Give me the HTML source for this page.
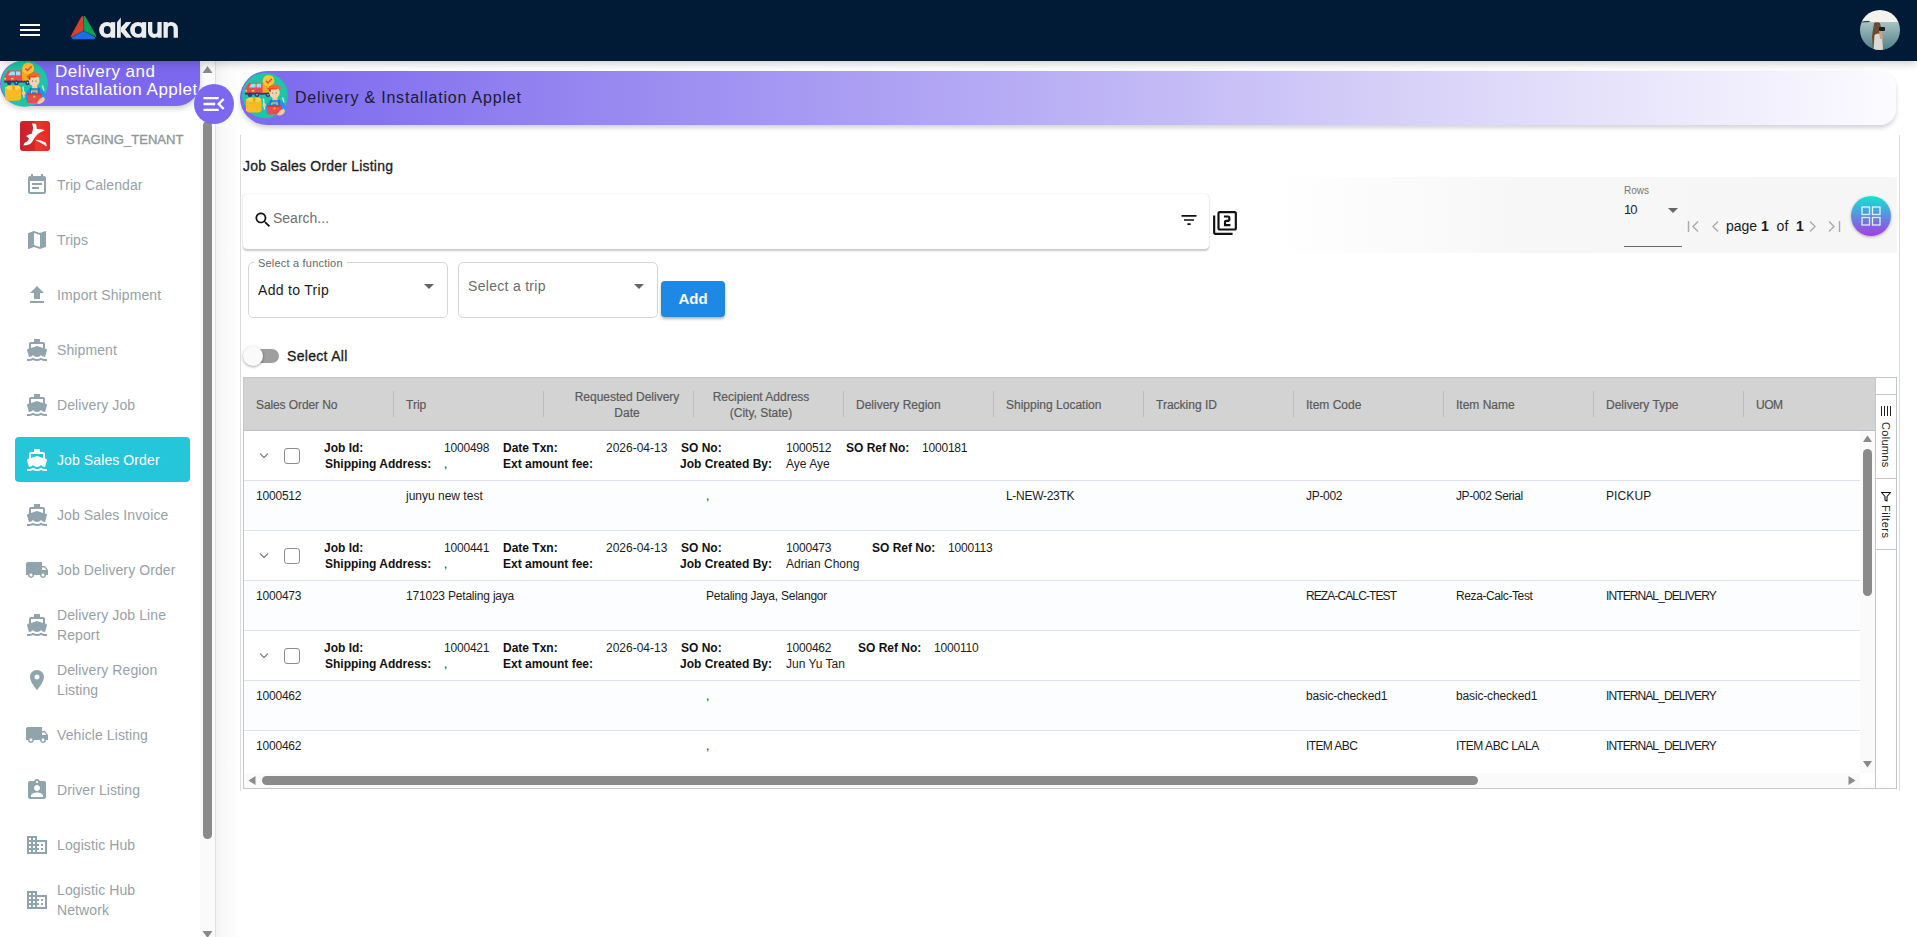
<!DOCTYPE html>
<html><head><meta charset="utf-8">
<style>
*{box-sizing:border-box;margin:0;padding:0}
html,body{width:1917px;height:937px;overflow:hidden;background:#fff;font-family:"Liberation Sans",sans-serif;color:#222}
.a{position:absolute}
.nw{white-space:nowrap}
svg{display:block}
/* header */
#hdr{left:0;top:0;width:1917px;height:61px;background:#011a35;z-index:5;box-shadow:0 2px 9px rgba(0,0,0,.22)}
/* sidebar */
#side{left:0;top:61px;width:216px;height:876px;background:#fff;border-right:1px solid #e0e0e0;z-index:3}
.mi{position:absolute;left:0;width:200px;height:45px}
.mi svg{position:absolute;left:26px;top:12px;width:22px;height:22px;fill:#90a4ae}
.mi span{position:absolute;left:57px;font-size:14px;color:#8f9ba1;white-space:nowrap;line-height:20px}
</style></head>
<body>
<svg width="0" height="0" style="position:absolute"><defs>
<symbol id="applet" viewBox="0 0 46 46">
<circle cx="23" cy="23" r="22.8" fill="#1fc6a6"/>
<path d="M20 10 H27.5 V21.5 H20Z" fill="#f6a81c"/>
<path d="M3.5 15.5 L7 10.2 H20.5 V21.5 H3.5Z" fill="#ee4850"/>
<path d="M7 15 L9.3 11.2 H13.6 V15Z" fill="#8fe6fb"/>
<path d="M14.6 11.2 H19 V15 H14.6Z" fill="#8fe6fb"/>
<rect x="3.3" y="17.5" width="1.6" height="1.6" fill="#ffd54f"/><rect x="9.8" y="17.5" width="2.4" height="1.6" fill="#ffd54f"/>
<rect x="3" y="20.3" width="25" height="1.8" fill="#2f3d6b"/>
<circle cx="8" cy="22.3" r="2.3" fill="#2f3d6b"/><circle cx="15" cy="22.3" r="2.3" fill="#2f3d6b"/><circle cx="26" cy="22.3" r="2.3" fill="#2f3d6b"/>
<circle cx="15" cy="22.3" r=".8" fill="#8fe6fb"/><circle cx="26" cy="22.3" r=".8" fill="#8fe6fb"/>
<circle cx="26.6" cy="8.2" r="5.8" fill="#fdc82f"/>
<path d="M23.8 8.2 L26 10.4 L29.8 6.2" stroke="#ee4850" stroke-width="1.5" fill="none"/>
<path d="M4 27 L7.5 25.3 H17.5 L19.5 27.5 V38.5 L16.5 40 H6.5 L4 38.3Z" fill="#fdbb22"/>
<path d="M4 27 L7.5 25.3 H17.5 L19.5 27.5 L15.5 29 H7Z" fill="#ffd54f"/>
<rect x="11" y="25.3" width="2.4" height="4" fill="#f59c1a"/>
<path d="M24 37 C24 30 27 27 33 27 C40 27 43 30 43.5 36 L42 41 H25Z" fill="#2c90e8"/>
<rect x="28.5" y="27" width="1.2" height="6" fill="#1d6ac2"/><rect x="36.5" y="27" width="1.2" height="6" fill="#1d6ac2"/>
<rect x="30.5" y="23.5" width="5" height="4" fill="#f7c7a0"/>
<ellipse cx="32.5" cy="20" rx="5.2" ry="5.6" fill="#f8d2b0"/>
<path d="M27 18 C27 15 28 14 29 14.5 L28.5 20Z" fill="#7a3b2a"/>
<path d="M26.5 16.5 C26.5 10.5 38.8 10.5 38.8 16.5Z" fill="#f2662b"/>
<rect x="25" y="15.5" width="10" height="1.6" rx=".8" fill="#e8531a"/>
<circle cx="30.8" cy="20.5" r=".5" fill="#333"/><circle cx="34.2" cy="20.5" r=".5" fill="#333"/>
<path d="M21.5 26 L22.5 37 M40.5 25 L42 30" stroke="#cfe3e8" stroke-width="1.4"/>
<circle cx="22.2" cy="32.5" r="1.8" fill="#f7c7a0"/>
<rect x="25.5" y="32.5" width="14" height="9.5" rx="1" fill="#ee4850"/>
<rect x="25.5" y="32.5" width="14" height="2" fill="#d63a42"/>
<path d="M29.8 32.5 V30.5 H35.2 V32.5" stroke="#fdc82f" stroke-width="1.1" fill="none"/>
<rect x="31.5" y="35" width="2" height="1.8" fill="#fdc82f"/>
<path d="M35 42 C37 44 41 43 43 39 L42 36 L38 38Z" fill="#f7c7a0"/>
</symbol>
</defs></svg>
<div id="hdr" class="a">
  <svg class="a" style="left:20px;top:23px" width="20" height="14" viewBox="0 0 20 14"><rect x="0" y="1" width="20" height="2" fill="#fff"/><rect x="0" y="6" width="20" height="2" fill="#fff"/><rect x="0" y="11" width="20" height="2" fill="#fff"/></svg>
  <svg class="a" style="left:66px;top:12px" width="36" height="32" viewBox="0 0 36 32">
    <polygon points="15.6,5 17,4.4 17,18.5 5.2,24.8 5.3,23.8" fill="#d9412b" stroke="#d9412b" stroke-width=".8" stroke-linejoin="round"/>
    <polygon points="18,4.4 19.2,5 29.8,23.8 29.8,24.6 18,18.5" fill="#07a35a" stroke="#07a35a" stroke-width=".8" stroke-linejoin="round"/>
    <polygon points="17.5,19.3 29,25.6 28.2,26.9 6.8,26.9 6,25.6" fill="#1a6fe8" stroke="#1a6fe8" stroke-width=".8" stroke-linejoin="round"/>
  </svg>
  <svg class="a" style="left:95px;top:12px" width="90" height="33" viewBox="0 0 90 33">
  <g fill="#ececec">
    <circle cx="12" cy="17.95" r="7.9"/><rect x="16" y="10.1" width="4.2" height="15.7"/>
    <path d="M22 10.2 L25.8 5.6 V25.8 H22Z"/>
    <path d="M25.8 15.6 L31 10.1 H36.3 L30.2 17.6 L36.8 25.8 H31.2 L25.8 19.4Z"/>
    <circle cx="43" cy="17.95" r="7.9"/><rect x="47" y="10.1" width="4.2" height="15.7"/>
    <path d="M53 10.1 H57.3 V19.2 A2.55 2.55 0 0 0 62.4 19.2 V10.1 H66.7 V25.8 H62.6 L62.4 24.6 C61.3 25.6 60.2 26 59.1 26 A6.1 6.6 0 0 1 53 19.4Z"/>
    <path d="M68.5 25.8 V10.1 H72.6 L72.8 11.3 C73.9 10.3 75 9.9 76.3 9.9 A6.6 6.6 0 0 1 82.9 16.5 V25.8 H78.6 V16.6 A2.9 2.9 0 0 0 72.8 16.6 V25.8Z"/>
  </g>
  <ellipse cx="12.2" cy="18" rx="3.4" ry="4.1" fill="#011a35"/>
  <ellipse cx="43.2" cy="18" rx="3.4" ry="4.1" fill="#011a35"/>
</svg>
  <svg class="a" style="left:1860px;top:10px" width="40" height="40" viewBox="0 0 40 40">
<defs><clipPath id="avc"><circle cx="20" cy="20" r="20"/></clipPath>
<linearGradient id="sea" x1="0" y1="0" x2="0" y2="1"><stop offset="0" stop-color="#a9c3c6"/><stop offset="1" stop-color="#4f8088"/></linearGradient></defs>
<g clip-path="url(#avc)">
<rect width="40" height="12" fill="#f4f2ec"/>
<rect y="12" width="40" height="28" fill="url(#sea)"/>
<path d="M0 12.5 Q3 10.5 6 11 Q8 10 10.5 12 Z" fill="#2c4a3a"/>
<path d="M14 13 Q17 11.5 20 13 L21.5 20 L20 35 L13 40 L12 26 Z" fill="#6e4a30"/>
<path d="M13.5 40 L14.5 25 Q18 22 22 25 L23 40Z" fill="#dcd8d4"/>
<path d="M19 21 L22 20 L23 29 L20 29Z" fill="#caa184"/>
<rect x="19" y="17" width="6" height="4" rx="1" fill="#1b1e1f"/>
</g></svg>

</div>

<div id="side" class="a">
  <div class="a" style="left:200px;top:0;width:15px;height:876px;background:#fafafa"></div>
  <svg class="a" style="left:202px;top:4px" width="11" height="9" viewBox="0 0 11 9"><polygon points="5.5,1 10.5,8 0.5,8" fill="#8a8a8a"/></svg>
  <div class="a" style="left:203px;top:60px;width:9px;height:718px;background:#8a8a8a;border-radius:5px"></div>
  <svg class="a" style="left:202px;top:869px" width="11" height="9" viewBox="0 0 11 9"><polygon points="0.5,1 10.5,1 5.5,8" fill="#8a8a8a"/></svg>

  <div class="a" style="left:0;top:0;width:200px;height:45px;background:#7b68ee;border-radius:23px 0 24px 23px;box-shadow:0 3px 5px rgba(0,0,0,.18)"></div>
  <svg class="a" style="left:1px;top:-1px" width="47" height="47"><use href="#applet"/></svg>
  <div class="a nw" style="left:55px;top:2px;font-size:17px;line-height:18px;color:#fff;width:145px;overflow:hidden;letter-spacing:0.5px">Delivery and<br>Installation Applet</div>
  <div class="a" style="left:194px;top:23px;width:40px;height:40px;border-radius:50%;background:#7b68ee;z-index:4">
    <svg class="a" style="left:6px;top:6px" width="28" height="28" viewBox="0 0 24 24"><path fill="#fff" d="M3 18h13v-2H3v2zm0-5h10v-2H3v2zm0-7v2h13V6H3zm18 9.59L17.42 12 21 8.41 19.59 7l-5 5 5 5L21 15.59z"/></svg>
  </div>

  <div class="a" style="left:20px;top:60px;width:30px;height:30px;border-radius:3px;background:linear-gradient(90deg,#c8222a 0%,#d2262a 45%,#ea3a28 55%,#e8262a 100%)">
    <svg class="a" style="left:0;top:0" width="30" height="30" viewBox="0 0 30 30"><path fill="#fff" d="M12 2.6 C14 2.4 16 3 16.2 3.8 L16.7 8.1 C19 8 23 8.2 24.8 9.4 C22 10.5 19 11.8 17 13.7 C15.5 15.5 14 17.5 13.2 19.2 C12 21.5 10.5 23 9 23.5 C7 24 4.5 24.6 3.4 24.4 C3.8 23.5 4.2 22.6 4.7 21.8 C6.5 21.5 8 20 9 17.5 C8 16.5 7 15.6 6 14.9 C8 13.8 10 13 12 12.4 L13.2 6.4 C12.8 5 12.2 3.8 12 2.6Z M15 18.8 C18.5 19 23 20 25.6 21.4 C26.5 22.8 26.8 24.2 26.5 25.6 C24.5 24.2 22.5 22.8 20.5 21.8 C18.5 20.8 16.5 19.8 15 18.8Z"/></svg>
  </div>
  <div class="a nw" style="left:66px;top:71px;font-size:13px;color:#8e979b;letter-spacing:0.05px;-webkit-text-stroke:0.35px #8e979b">STAGING_TENANT</div>
  <svg class="a" style="left:25px;top:112px" width="24" height="24" viewBox="0 0 24 24"><path fill="#90a4ae" d="M17 10H7v2h10v-2zm2-7h-1V1h-2v2H8V1H6v2H5c-1.11 0-1.99.9-1.99 2L3 19c0 1.1.89 2 2 2h14c1.1 0 2-.9 2-2V5c0-1.1-.9-2-2-2zm0 16H5V8h14v11zm-5-5H7v2h7v-2z"/></svg>
  <div class="a nw" style="left:57px;top:114px;font-size:14px;line-height:20px;color:#96a1a7;letter-spacing:0.1px">Trip Calendar</div>
  <svg class="a" style="left:25px;top:167px" width="24" height="24" viewBox="0 0 24 24"><path fill="#90a4ae" d="M20.5 3l-.16.03L15 5.1 9 3 3.36 4.9c-.21.07-.36.25-.36.48V20.5c0 .28.22.5.5.5l.16-.03L9 18.9l6 2.1 5.640-1.9c.21-.07.36-.25.36-.48V3.5c0-.28-.22-.5-.5-.5zM15 19l-6-2.11V5l6 2.11V19z"/></svg>
  <div class="a nw" style="left:57px;top:169px;font-size:14px;line-height:20px;color:#96a1a7;letter-spacing:0.1px">Trips</div>
  <svg class="a" style="left:25px;top:222px" width="24" height="24" viewBox="0 0 24 24"><path fill="#90a4ae" d="M9 16h6v-6h4l-7-7-7 7h4zm-4 2h14v2H5z"/></svg>
  <div class="a nw" style="left:57px;top:224px;font-size:14px;line-height:20px;color:#96a1a7;letter-spacing:0.1px">Import Shipment</div>
  <svg class="a" style="left:25px;top:277px" width="24" height="24" viewBox="0 0 24 24"><path fill="#90a4ae" d="M20 21c-1.39 0-2.78-.47-4-1.320-2.44 1.71-5.56 1.71-8 0C6.78 20.53 5.39 21 4 21H2v2h2c1.38 0 2.74-.35 4-.99 2.52 1.29 5.48 1.29 8 0 1.26.65 2.62.99 4 .99h2v-2h-2zM3.95 19H4c1.6 0 3.02-.88 4-2 .98 1.12 2.4 2 4 2s3.02-.88 4-2c.98 1.12 2.4 2 4 2h.05l1.89-6.68c.08-.26.06-.54-.06-.78s-.34-.42-.6-.5L20 10.62V6c0-1.1-.9-2-2-2h-3V1H9v3H6c-1.1 0-2 .9-2 2v4.62l-1.29.42c-.26.08-.48.26-.6.5s-.15.52-.06.78L3.95 19zM6 6h12v3.97L12 8 6 9.970V6z"/></svg>
  <div class="a nw" style="left:57px;top:279px;font-size:14px;line-height:20px;color:#96a1a7;letter-spacing:0.1px">Shipment</div>
  <svg class="a" style="left:25px;top:332px" width="24" height="24" viewBox="0 0 24 24"><path fill="#90a4ae" d="M20 21c-1.39 0-2.78-.47-4-1.320-2.44 1.71-5.56 1.71-8 0C6.78 20.53 5.39 21 4 21H2v2h2c1.38 0 2.74-.35 4-.99 2.52 1.29 5.48 1.29 8 0 1.26.65 2.62.99 4 .99h2v-2h-2zM3.95 19H4c1.6 0 3.02-.88 4-2 .98 1.12 2.4 2 4 2s3.02-.88 4-2c.98 1.12 2.4 2 4 2h.05l1.89-6.68c.08-.26.06-.54-.06-.78s-.34-.42-.6-.5L20 10.62V6c0-1.1-.9-2-2-2h-3V1H9v3H6c-1.1 0-2 .9-2 2v4.62l-1.29.42c-.26.08-.48.26-.6.5s-.15.52-.06.78L3.95 19zM6 6h12v3.97L12 8 6 9.970V6z"/></svg>
  <div class="a nw" style="left:57px;top:334px;font-size:14px;line-height:20px;color:#96a1a7;letter-spacing:0.1px">Delivery Job</div>
  <div class="a" style="left:15px;top:376px;width:175px;height:45px;background:#26c6da;border-radius:4px"></div>
  <svg class="a" style="left:25px;top:387px" width="24" height="24" viewBox="0 0 24 24"><path fill="#fff" d="M20 21c-1.39 0-2.78-.47-4-1.320-2.44 1.71-5.56 1.71-8 0C6.78 20.53 5.39 21 4 21H2v2h2c1.38 0 2.74-.35 4-.99 2.52 1.29 5.48 1.29 8 0 1.26.65 2.62.99 4 .99h2v-2h-2zM3.95 19H4c1.6 0 3.02-.88 4-2 .98 1.12 2.4 2 4 2s3.02-.88 4-2c.98 1.12 2.4 2 4 2h.05l1.89-6.68c.08-.26.06-.54-.06-.78s-.34-.42-.6-.5L20 10.62V6c0-1.1-.9-2-2-2h-3V1H9v3H6c-1.1 0-2 .9-2 2v4.62l-1.29.42c-.26.08-.48.26-.6.5s-.15.52-.06.78L3.95 19zM6 6h12v3.97L12 8 6 9.970V6z"/></svg>
  <div class="a nw" style="left:57px;top:389px;font-size:14px;line-height:20px;color:#fff;letter-spacing:0.1px">Job Sales Order</div>
  <svg class="a" style="left:25px;top:442px" width="24" height="24" viewBox="0 0 24 24"><path fill="#90a4ae" d="M20 21c-1.39 0-2.78-.47-4-1.320-2.44 1.71-5.56 1.71-8 0C6.78 20.53 5.39 21 4 21H2v2h2c1.38 0 2.74-.35 4-.99 2.52 1.29 5.48 1.29 8 0 1.26.65 2.62.99 4 .99h2v-2h-2zM3.95 19H4c1.6 0 3.02-.88 4-2 .98 1.12 2.4 2 4 2s3.02-.88 4-2c.98 1.12 2.4 2 4 2h.05l1.89-6.68c.08-.26.06-.54-.06-.78s-.34-.42-.6-.5L20 10.62V6c0-1.1-.9-2-2-2h-3V1H9v3H6c-1.1 0-2 .9-2 2v4.62l-1.29.42c-.26.08-.48.26-.6.5s-.15.52-.06.78L3.95 19zM6 6h12v3.97L12 8 6 9.970V6z"/></svg>
  <div class="a nw" style="left:57px;top:444px;font-size:14px;line-height:20px;color:#96a1a7;letter-spacing:0.1px">Job Sales Invoice</div>
  <svg class="a" style="left:25px;top:497px" width="24" height="24" viewBox="0 0 24 24"><path fill="#90a4ae" d="M20 8h-3V4H3c-1.1 0-2 .9-2 2v11h2c0 1.66 1.34 3 3 3s3-1.34 3-3h6c0 1.66 1.34 3 3 3s3-1.34 3-3h2v-5l-3-4zM6 18.5c-.83 0-1.5-.67-1.5-1.5s.67-1.5 1.5-1.5 1.5.67 1.5 1.5-.67 1.5-1.5 1.5zm13.5-9l1.96 2.5H17V9.5h2.5zm-1.5 9c-.83 0-1.5-.67-1.5-1.5s.67-1.5 1.5-1.5 1.5.67 1.5 1.5-.67 1.5-1.5 1.5z"/></svg>
  <div class="a nw" style="left:57px;top:499px;font-size:14px;line-height:20px;color:#96a1a7;letter-spacing:0.1px">Job Delivery Order</div>
  <svg class="a" style="left:25px;top:552px" width="24" height="24" viewBox="0 0 24 24"><path fill="#90a4ae" d="M20 21c-1.39 0-2.78-.47-4-1.320-2.44 1.71-5.56 1.71-8 0C6.78 20.53 5.39 21 4 21H2v2h2c1.38 0 2.74-.35 4-.99 2.52 1.29 5.48 1.29 8 0 1.26.65 2.62.99 4 .99h2v-2h-2zM3.95 19H4c1.6 0 3.02-.88 4-2 .98 1.12 2.4 2 4 2s3.02-.88 4-2c.98 1.12 2.4 2 4 2h.05l1.89-6.68c.08-.26.06-.54-.06-.78s-.34-.42-.6-.5L20 10.62V6c0-1.1-.9-2-2-2h-3V1H9v3H6c-1.1 0-2 .9-2 2v4.62l-1.29.42c-.26.08-.48.26-.6.5s-.15.52-.06.78L3.95 19zM6 6h12v3.97L12 8 6 9.970V6z"/></svg>
  <div class="a nw" style="left:57px;top:544px;font-size:14px;line-height:20px;color:#96a1a7;letter-spacing:0.1px">Delivery Job Line<br>Report</div>
  <svg class="a" style="left:25px;top:607px" width="24" height="24" viewBox="0 0 24 24"><path fill="#90a4ae" d="M12 2C8.13 2 5 5.13 5 9c0 5.250 7 13 7 13s7-7.75 7-13c0-3.87-3.13-7-7-7zm0 9.5c-1.38 0-2.5-1.12-2.5-2.5s1.12-2.5 2.5-2.5 2.5 1.12 2.5 2.5-1.12 2.5-2.5 2.5z"/></svg>
  <div class="a nw" style="left:57px;top:599px;font-size:14px;line-height:20px;color:#96a1a7;letter-spacing:0.1px">Delivery Region<br>Listing</div>
  <svg class="a" style="left:25px;top:662px" width="24" height="24" viewBox="0 0 24 24"><path fill="#90a4ae" d="M20 8h-3V4H3c-1.1 0-2 .9-2 2v11h2c0 1.66 1.34 3 3 3s3-1.34 3-3h6c0 1.66 1.34 3 3 3s3-1.34 3-3h2v-5l-3-4zM6 18.5c-.83 0-1.5-.67-1.5-1.5s.67-1.5 1.5-1.5 1.5.67 1.5 1.5-.67 1.5-1.5 1.5zm13.5-9l1.96 2.5H17V9.5h2.5zm-1.5 9c-.83 0-1.5-.67-1.5-1.5s.67-1.5 1.5-1.5 1.5.67 1.5 1.5-.67 1.5-1.5 1.5z"/></svg>
  <div class="a nw" style="left:57px;top:664px;font-size:14px;line-height:20px;color:#96a1a7;letter-spacing:0.1px">Vehicle Listing</div>
  <svg class="a" style="left:25px;top:717px" width="24" height="24" viewBox="0 0 24 24"><path fill="#90a4ae" d="M19 3h-4.18C14.4 1.84 13.3 1 12 1c-1.3 0-2.4.84-2.82 2H5c-1.1 0-2 .9-2 2v14c0 1.1.9 2 2 2h14c1.1 0 2-.9 2-2V5c0-1.1-.9-2-2-2zm-7 0c.55 0 1 .45 1 1s-.45 1-1 1-1-.45-1-1 .45-1 1-1zm0 4c1.66 0 3 1.34 3 3s-1.34 3-3 3-3-1.34-3-3 1.34-3 3-3zm6 12H6v-1.4c0-2 4-3.1 6-3.1s6 1.1 6 3.1V19z"/></svg>
  <div class="a nw" style="left:57px;top:719px;font-size:14px;line-height:20px;color:#96a1a7;letter-spacing:0.1px">Driver Listing</div>
  <svg class="a" style="left:25px;top:772px" width="24" height="24" viewBox="0 0 24 24"><path fill="#90a4ae" d="M12 7V3H2v18h20V7H12zM6 19H4v-2h2v2zm0-4H4v-2h2v2zm0-4H4V9h2v2zm0-4H4V5h2v2zm4 12H8v-2h2v2zm0-4H8v-2h2v2zm0-4H8V9h2v2zm0-4H8V5h2v2zm10 12h-8v-2h2v-2h-2v-2h2v-2h-2V9h8v10zm-2-8h-2v2h2v-2zm0 4h-2v2h2v-2z"/></svg>
  <div class="a nw" style="left:57px;top:774px;font-size:14px;line-height:20px;color:#96a1a7;letter-spacing:0.1px">Logistic Hub</div>
  <svg class="a" style="left:25px;top:827px" width="24" height="24" viewBox="0 0 24 24"><path fill="#90a4ae" d="M12 7V3H2v18h20V7H12zM6 19H4v-2h2v2zm0-4H4v-2h2v2zm0-4H4V9h2v2zm0-4H4V5h2v2zm4 12H8v-2h2v2zm0-4H8v-2h2v2zm0-4H8V9h2v2zm0-4H8V5h2v2zm10 12h-8v-2h2v-2h-2v-2h2v-2h-2V9h8v10zm-2-8h-2v2h2v-2zm0 4h-2v2h2v-2z"/></svg>
  <div class="a nw" style="left:57px;top:819px;font-size:14px;line-height:20px;color:#96a1a7;letter-spacing:0.1px">Logistic Hub<br>Network</div>
</div>


<!-- sidebar shadow -->
<div class="a" style="left:216px;top:61px;width:28px;height:876px;background:linear-gradient(90deg,#f3f3f3,rgba(248,248,248,.6) 40%,rgba(255,255,255,0))"></div>
<!-- banner -->
<div class="a" style="left:240px;top:71px;width:1656px;height:54px;border-radius:27px 16px 16px 27px;background:linear-gradient(90deg,#7b68ee 0%,#9b8cf1 25%,#bbb1f5 50%,#ddd8f9 75%,#fcfbff 100%);box-shadow:0 3px 4px rgba(30,40,70,.2)"></div>
<svg class="a" style="left:242px;top:72px" width="46" height="47"><use href="#applet"/></svg>
<div class="a nw" style="left:295px;top:89px;font-size:16px;color:#1b1b33;letter-spacing:0.8px">Delivery &amp; Installation Applet</div>
<!-- card borders -->
<div class="a" style="left:240px;top:135px;width:1px;height:656px;background:#dcdcdc"></div>
<div class="a" style="left:1899px;top:135px;width:1px;height:656px;background:#dcdcdc"></div>
<div class="a nw" style="left:243px;top:158px;font-size:14px;color:#1d1d1d;letter-spacing:0.2px;-webkit-text-stroke:0.3px #1d1d1d">Job Sales Order Listing</div>
<!-- search -->
<div class="a" style="left:243px;top:194px;width:966px;height:55px;background:#fff;border-radius:4px;box-shadow:0 2px 2px rgba(0,0,0,.2),0 0 1px rgba(0,0,0,.25)"></div>
<svg class="a" style="left:253px;top:210px" width="20" height="20" viewBox="0 0 24 24"><path fill="#111" d="M15.5 14h-.79l-.28-.27C15.41 12.59 16 11.11 16 9.5 16 5.91 13.09 3 9.5 3S3 5.91 3 9.5 5.91 16 9.5 16c1.61 0 3.09-.59 4.23-1.57l.27.28v.79l5 4.99L20.49 19l-4.99-5zm-6 0C7.01 14 5 11.99 5 9.5S7.01 5 9.5 5 14 7.01 14 9.5 11.99 14 9.5 14z"/></svg>
<div class="a nw" style="left:273px;top:210px;font-size:14px;color:#707070;letter-spacing:0px">Search...</div>
<svg class="a" style="left:1179px;top:210px" width="20" height="20" viewBox="0 0 24 24"><path fill="#111" d="M10 18h4v-2h-4v2zM3 6v2h18V6H3zm3 7h12v-2H6v2z"/></svg>
<svg class="a" style="left:1212px;top:210px" width="26" height="26" viewBox="0 0 24 24"><path fill="#111" d="M3 5H1v16c0 1.1.9 2 2 2h16v-2H3V5zm18-4H7c-1.1 0-2 .9-2 2v14c0 1.1.9 2 2 2h14c1.1 0 2-.9 2-2V3c0-1.1-.9-2-2-2zm0 16H7V3h14v14zm-4-4h-4v-2h2c1.1 0 2-.89 2-2V7c0-1.11-.9-2-2-2h-4v2h4v2h-2c-1.1 0-2 .89-2 2v4h6v-2z"/></svg>
<!-- pagination band -->
<div class="a" style="left:1270px;top:177px;width:627px;height:76px;background:linear-gradient(90deg,rgba(247,247,247,0) 0%,#f7f7f7 40%,#f6f6f6 100%)"></div>
<div class="a nw" style="left:1624px;top:185px;font-size:10px;color:#777">Rows</div>
<div class="a nw" style="left:1624px;top:202px;font-size:13px;color:#222;letter-spacing:-0.9px">10</div>
<svg class="a" style="left:1666px;top:204px" width="14" height="14" viewBox="0 0 14 14"><polygon points="2,4 12,4 7,9" fill="#666"/></svg>
<div class="a" style="left:1624px;top:246px;width:58px;height:1px;background:#666"></div>
<svg class="a" style="left:1684px;top:214px" width="20" height="24" viewBox="0 0 20 24"><path d="M4.5 7 V18 M14 7.5 L9 12.5 L14 17.5" stroke="#aaa" stroke-width="1.4" fill="none"/></svg>
<svg class="a" style="left:1707px;top:214px" width="16" height="24" viewBox="0 0 16 24"><path d="M11 7.5 L6 12.5 L11 17.5" stroke="#aaa" stroke-width="1.4" fill="none"/></svg>
<div class="a nw" style="left:1726px;top:218px;font-size:14px;color:#1a1a1a">page <b style="font-weight:700">1</b>&nbsp; of &nbsp;<b>1</b></div>
<svg class="a" style="left:1805px;top:214px" width="16" height="24" viewBox="0 0 16 24"><path d="M5 7.5 L10 12.5 L5 17.5" stroke="#aaa" stroke-width="1.4" fill="none"/></svg>
<svg class="a" style="left:1824px;top:214px" width="20" height="24" viewBox="0 0 20 24"><path d="M5 7.5 L10 12.5 L5 17.5 M15.5 7 V18" stroke="#aaa" stroke-width="1.4" fill="none"/></svg>
<div class="a" style="left:1851px;top:196px;width:40px;height:40px;border-radius:50%;background:linear-gradient(180deg,#12e6cf 0%,#5a8fe0 50%,#a83be3 100%);box-shadow:0 1px 3px rgba(0,0,0,.3)">
  <svg class="a" style="left:9px;top:9px" width="22" height="22" viewBox="0 0 22 22"><g fill="none" stroke="#fff" stroke-width="1.3" opacity=".85"><rect x="2" y="2" width="7.5" height="7.5"/><rect x="12.5" y="2" width="7.5" height="7.5"/><rect x="2" y="12.5" width="7.5" height="7.5"/><rect x="12.5" y="12.5" width="7.5" height="7.5"/></g></svg>
</div>
<!-- function selects -->
<div class="a" style="left:248px;top:262px;width:200px;height:56px;border:1px solid #d6d6d6;border-radius:5px"></div>
<div class="a nw" style="left:254px;top:257px;font-size:11px;color:#666;background:#fff;padding:0 4px;letter-spacing:0.2px">Select a function</div>
<div class="a nw" style="left:258px;top:282px;font-size:14px;color:#1a1a1a;letter-spacing:0.3px">Add to Trip</div>
<svg class="a" style="left:422px;top:280px" width="14" height="14" viewBox="0 0 14 14"><polygon points="2,4 12,4 7,9" fill="#666"/></svg>
<div class="a" style="left:458px;top:262px;width:200px;height:56px;border:1px solid #d6d6d6;border-radius:5px"></div>
<div class="a nw" style="left:468px;top:278px;font-size:14px;color:#6c6c6c;letter-spacing:0.3px">Select a trip</div>
<svg class="a" style="left:632px;top:280px" width="14" height="14" viewBox="0 0 14 14"><polygon points="2,4 12,4 7,9" fill="#666"/></svg>
<div class="a" style="left:661px;top:281px;width:64px;height:36px;background:#1e88e5;border-radius:4px;box-shadow:0 2px 3px rgba(0,0,0,.3);color:#fff;font-weight:700;font-size:15px;text-align:center;line-height:36px">Add</div>
<!-- select all -->
<div class="a" style="left:245px;top:349px;width:34px;height:14px;border-radius:7px;background:#9e9e9e"></div>
<div class="a" style="left:243px;top:346px;width:20px;height:20px;border-radius:50%;background:#fafafa;box-shadow:0 1px 3px rgba(0,0,0,.35)"></div>
<div class="a nw" style="left:287px;top:348px;font-size:14px;color:#1a1a1a;letter-spacing:0.3px;-webkit-text-stroke:0.3px #1a1a1a">Select All</div>

<!-- table -->
<div class="a" style="left:243px;top:377px;width:1654px;height:412px;border:1px solid #c2c7ce;background:#fff"></div>
<div class="a" style="left:244px;top:378px;width:1632px;height:53px;background:#d3d3d3;border-bottom:1px solid #babfc7"></div>
<div class="a" style="left:393px;top:391px;width:1px;height:26px;background:#bdbdbd"></div>
<div class="a" style="left:543px;top:391px;width:1px;height:26px;background:#bdbdbd"></div>
<div class="a" style="left:693px;top:391px;width:1px;height:26px;background:#bdbdbd"></div>
<div class="a" style="left:843px;top:391px;width:1px;height:26px;background:#bdbdbd"></div>
<div class="a" style="left:993px;top:391px;width:1px;height:26px;background:#bdbdbd"></div>
<div class="a" style="left:1143px;top:391px;width:1px;height:26px;background:#bdbdbd"></div>
<div class="a" style="left:1293px;top:391px;width:1px;height:26px;background:#bdbdbd"></div>
<div class="a" style="left:1443px;top:391px;width:1px;height:26px;background:#bdbdbd"></div>
<div class="a" style="left:1593px;top:391px;width:1px;height:26px;background:#bdbdbd"></div>
<div class="a" style="left:1743px;top:391px;width:1px;height:26px;background:#bdbdbd"></div>
<div class="a nw" style="left:256px;top:397px;font-size:12px;line-height:16px;color:#5a5a5a;-webkit-text-stroke:0.2px #5a5a5a;letter-spacing:-0.1px">Sales Order No</div>
<div class="a nw" style="left:406px;top:397px;font-size:12px;line-height:16px;color:#5a5a5a;-webkit-text-stroke:0.2px #5a5a5a;letter-spacing:0px">Trip</div>
<div class="a nw" style="left:574px;top:389px;width:106px;font-size:12px;line-height:16px;color:#5a5a5a;-webkit-text-stroke:0.2px #5a5a5a;text-align:center">Requested Delivery<br>Date</div>
<div class="a nw" style="left:712px;top:389px;width:98px;font-size:12px;line-height:16px;color:#5a5a5a;-webkit-text-stroke:0.2px #5a5a5a;text-align:center">Recipient Address<br>(City, State)</div>
<div class="a nw" style="left:856px;top:397px;font-size:12px;line-height:16px;color:#5a5a5a;-webkit-text-stroke:0.2px #5a5a5a;letter-spacing:0px">Delivery Region</div>
<div class="a nw" style="left:1006px;top:397px;font-size:12px;line-height:16px;color:#5a5a5a;-webkit-text-stroke:0.2px #5a5a5a;letter-spacing:0px">Shipping Location</div>
<div class="a nw" style="left:1156px;top:397px;font-size:12px;line-height:16px;color:#5a5a5a;-webkit-text-stroke:0.2px #5a5a5a;letter-spacing:0px">Tracking ID</div>
<div class="a nw" style="left:1306px;top:397px;font-size:12px;line-height:16px;color:#5a5a5a;-webkit-text-stroke:0.2px #5a5a5a;letter-spacing:0px">Item Code</div>
<div class="a nw" style="left:1456px;top:397px;font-size:12px;line-height:16px;color:#5a5a5a;-webkit-text-stroke:0.2px #5a5a5a;letter-spacing:0px">Item Name</div>
<div class="a nw" style="left:1606px;top:397px;font-size:12px;line-height:16px;color:#5a5a5a;-webkit-text-stroke:0.2px #5a5a5a;letter-spacing:0px">Delivery Type</div>
<div class="a nw" style="left:1756px;top:397px;font-size:12px;line-height:16px;color:#5a5a5a;-webkit-text-stroke:0.2px #5a5a5a;letter-spacing:-0.5px">UOM</div>
<div class="a" style="left:1875px;top:378px;width:21px;height:410px;border-left:1px solid #c2c7ce;background:#fff"></div>
<div class="a" style="left:1875px;top:394px;width:21px;height:1px;background:#c2c7ce"></div>
<div class="a" style="left:1875px;top:478px;width:21px;height:1px;background:#c2c7ce"></div>
<div class="a" style="left:1875px;top:549px;width:21px;height:1px;background:#c2c7ce"></div>
<svg class="a" style="left:1880px;top:405px" width="12" height="12" viewBox="0 0 12 12"><path d="M1.5 1V11 M4.5 1V11 M7.5 1V11 M10.5 1V11" stroke="#222" stroke-width="1"/></svg>
<div class="a nw" style="left:1879px;top:422px;font-size:11px;line-height:14px;color:#222;writing-mode:vertical-rl;letter-spacing:0.3px">Columns</div>
<svg class="a" style="left:1880px;top:491px" width="12" height="12" viewBox="0 0 12 12"><path d="M1.5 1.5 H10.5 L7 5.5 V10 L5 9 V5.5 Z" stroke="#111" stroke-width="1.1" fill="none" stroke-linejoin="round"/></svg>
<div class="a nw" style="left:1879px;top:505px;font-size:11px;line-height:14px;color:#222;writing-mode:vertical-rl;letter-spacing:0.5px">Filters</div>
<div class="a" style="left:244px;top:431px;width:1616px;height:50px;background:#fff;border-bottom:1px solid #dde2eb"></div>
<div class="a" style="left:244px;top:481px;width:1616px;height:50px;background:#fcfdfe;border-bottom:1px solid #dde2eb"></div>
<div class="a" style="left:244px;top:531px;width:1616px;height:50px;background:#fff;border-bottom:1px solid #dde2eb"></div>
<div class="a" style="left:244px;top:581px;width:1616px;height:50px;background:#fcfdfe;border-bottom:1px solid #dde2eb"></div>
<div class="a" style="left:244px;top:631px;width:1616px;height:50px;background:#fff;border-bottom:1px solid #dde2eb"></div>
<div class="a" style="left:244px;top:681px;width:1616px;height:50px;background:#fcfdfe;border-bottom:1px solid #dde2eb"></div>
<div class="a" style="left:244px;top:731px;width:1616px;height:50px;background:#fff;border-bottom:1px solid #dde2eb"></div>
<svg class="a" style="left:257px;top:450px" width="14" height="10" viewBox="0 0 14 10"><path d="M3 3.5 L7 7.5 L11 3.5" stroke="#555" stroke-width="1.05" fill="none"/></svg>
<div class="a" style="left:284px;top:448px;width:16px;height:16px;border:1px solid #8c8c8c;border-radius:3px;background:#fff"></div>
<div class="a nw" style="left:324px;top:440px;font-size:12px;line-height:16px;color:#111;font-weight:700;letter-spacing:0px">Job Id:</div>
<div class="a nw" style="left:325px;top:456px;font-size:12px;line-height:16px;color:#111;font-weight:700;letter-spacing:0px">Shipping Address:</div>
<div class="a nw" style="left:444px;top:440px;font-size:12px;line-height:16px;color:#1c1c1c;letter-spacing:-0.2px">1000498</div>
<div class="a nw" style="left:444px;top:456px;font-size:12px;line-height:16px;color:#1c1c1c;letter-spacing:0px">,</div>
<div class="a nw" style="left:503px;top:440px;font-size:12px;line-height:16px;color:#111;font-weight:700;letter-spacing:0px">Date Txn:</div>
<div class="a nw" style="left:503px;top:456px;font-size:12px;line-height:16px;color:#111;font-weight:700;letter-spacing:0px">Ext amount fee:</div>
<div class="a nw" style="left:606px;top:440px;font-size:12px;line-height:16px;color:#1c1c1c;letter-spacing:0px">2026-04-13</div>
<div class="a nw" style="left:681px;top:440px;font-size:12px;line-height:16px;color:#111;font-weight:700;letter-spacing:0px">SO No:</div>
<div class="a nw" style="left:680px;top:456px;font-size:12px;line-height:16px;color:#111;font-weight:700;letter-spacing:0px">Job Created By:</div>
<div class="a nw" style="left:786px;top:440px;font-size:12px;line-height:16px;color:#1c1c1c;letter-spacing:-0.2px">1000512</div>
<div class="a nw" style="left:786px;top:456px;font-size:12px;line-height:16px;color:#1c1c1c;letter-spacing:0px">Aye Aye</div>
<div class="a nw" style="left:846px;top:440px;font-size:12px;line-height:16px;color:#111;font-weight:700;letter-spacing:0px">SO Ref No:</div>
<div class="a nw" style="left:922px;top:440px;font-size:12px;line-height:16px;color:#1c1c1c;letter-spacing:-0.2px">1000181</div>
<svg class="a" style="left:257px;top:550px" width="14" height="10" viewBox="0 0 14 10"><path d="M3 3.5 L7 7.5 L11 3.5" stroke="#555" stroke-width="1.05" fill="none"/></svg>
<div class="a" style="left:284px;top:548px;width:16px;height:16px;border:1px solid #8c8c8c;border-radius:3px;background:#fff"></div>
<div class="a nw" style="left:324px;top:540px;font-size:12px;line-height:16px;color:#111;font-weight:700;letter-spacing:0px">Job Id:</div>
<div class="a nw" style="left:325px;top:556px;font-size:12px;line-height:16px;color:#111;font-weight:700;letter-spacing:0px">Shipping Address:</div>
<div class="a nw" style="left:444px;top:540px;font-size:12px;line-height:16px;color:#1c1c1c;letter-spacing:-0.2px">1000441</div>
<div class="a nw" style="left:444px;top:556px;font-size:12px;line-height:16px;color:#1c1c1c;letter-spacing:0px">,</div>
<div class="a nw" style="left:503px;top:540px;font-size:12px;line-height:16px;color:#111;font-weight:700;letter-spacing:0px">Date Txn:</div>
<div class="a nw" style="left:503px;top:556px;font-size:12px;line-height:16px;color:#111;font-weight:700;letter-spacing:0px">Ext amount fee:</div>
<div class="a nw" style="left:606px;top:540px;font-size:12px;line-height:16px;color:#1c1c1c;letter-spacing:0px">2026-04-13</div>
<div class="a nw" style="left:681px;top:540px;font-size:12px;line-height:16px;color:#111;font-weight:700;letter-spacing:0px">SO No:</div>
<div class="a nw" style="left:680px;top:556px;font-size:12px;line-height:16px;color:#111;font-weight:700;letter-spacing:0px">Job Created By:</div>
<div class="a nw" style="left:786px;top:540px;font-size:12px;line-height:16px;color:#1c1c1c;letter-spacing:-0.2px">1000473</div>
<div class="a nw" style="left:786px;top:556px;font-size:12px;line-height:16px;color:#1c1c1c;letter-spacing:0px">Adrian Chong</div>
<div class="a nw" style="left:872px;top:540px;font-size:12px;line-height:16px;color:#111;font-weight:700;letter-spacing:0px">SO Ref No:</div>
<div class="a nw" style="left:948px;top:540px;font-size:12px;line-height:16px;color:#1c1c1c;letter-spacing:-0.2px">1000113</div>
<svg class="a" style="left:257px;top:650px" width="14" height="10" viewBox="0 0 14 10"><path d="M3 3.5 L7 7.5 L11 3.5" stroke="#555" stroke-width="1.05" fill="none"/></svg>
<div class="a" style="left:284px;top:648px;width:16px;height:16px;border:1px solid #8c8c8c;border-radius:3px;background:#fff"></div>
<div class="a nw" style="left:324px;top:640px;font-size:12px;line-height:16px;color:#111;font-weight:700;letter-spacing:0px">Job Id:</div>
<div class="a nw" style="left:325px;top:656px;font-size:12px;line-height:16px;color:#111;font-weight:700;letter-spacing:0px">Shipping Address:</div>
<div class="a nw" style="left:444px;top:640px;font-size:12px;line-height:16px;color:#1c1c1c;letter-spacing:-0.2px">1000421</div>
<div class="a nw" style="left:444px;top:656px;font-size:12px;line-height:16px;color:#1c1c1c;letter-spacing:0px">,</div>
<div class="a nw" style="left:503px;top:640px;font-size:12px;line-height:16px;color:#111;font-weight:700;letter-spacing:0px">Date Txn:</div>
<div class="a nw" style="left:503px;top:656px;font-size:12px;line-height:16px;color:#111;font-weight:700;letter-spacing:0px">Ext amount fee:</div>
<div class="a nw" style="left:606px;top:640px;font-size:12px;line-height:16px;color:#1c1c1c;letter-spacing:0px">2026-04-13</div>
<div class="a nw" style="left:681px;top:640px;font-size:12px;line-height:16px;color:#111;font-weight:700;letter-spacing:0px">SO No:</div>
<div class="a nw" style="left:680px;top:656px;font-size:12px;line-height:16px;color:#111;font-weight:700;letter-spacing:0px">Job Created By:</div>
<div class="a nw" style="left:786px;top:640px;font-size:12px;line-height:16px;color:#1c1c1c;letter-spacing:-0.2px">1000462</div>
<div class="a nw" style="left:786px;top:656px;font-size:12px;line-height:16px;color:#1c1c1c;letter-spacing:0px">Jun Yu Tan</div>
<div class="a nw" style="left:858px;top:640px;font-size:12px;line-height:16px;color:#111;font-weight:700;letter-spacing:0px">SO Ref No:</div>
<div class="a nw" style="left:934px;top:640px;font-size:12px;line-height:16px;color:#1c1c1c;letter-spacing:-0.2px">1000110</div>
<div class="a nw" style="left:256px;top:488px;font-size:12px;line-height:16px;color:#1c1c1c;letter-spacing:-0.2px">1000512</div>
<div class="a nw" style="left:406px;top:488px;font-size:12px;line-height:16px;color:#1c1c1c;letter-spacing:0px">junyu new test</div>
<div class="a nw" style="left:706px;top:488px;font-size:12px;line-height:16px;color:#1c1c1c;letter-spacing:0px">,</div>
<div class="a nw" style="left:1006px;top:488px;font-size:12px;line-height:16px;color:#1c1c1c;letter-spacing:-0.3px">L-NEW-23TK</div>
<div class="a nw" style="left:1306px;top:488px;font-size:12px;line-height:16px;color:#1c1c1c;letter-spacing:-0.3px">JP-002</div>
<div class="a nw" style="left:1456px;top:488px;font-size:12px;line-height:16px;color:#1c1c1c;letter-spacing:-0.4px">JP-002 Serial</div>
<div class="a nw" style="left:1606px;top:488px;font-size:12px;line-height:16px;color:#1c1c1c;letter-spacing:0.1px">PICKUP</div>
<div class="a nw" style="left:256px;top:588px;font-size:12px;line-height:16px;color:#1c1c1c;letter-spacing:-0.2px">1000473</div>
<div class="a nw" style="left:406px;top:588px;font-size:12px;line-height:16px;color:#1c1c1c;letter-spacing:-0.2px">171023 Petaling jaya</div>
<div class="a nw" style="left:706px;top:588px;font-size:12px;line-height:16px;color:#1c1c1c;letter-spacing:-0.25px">Petaling Jaya, Selangor</div>
<div class="a nw" style="left:1306px;top:588px;font-size:12px;line-height:16px;color:#1c1c1c;letter-spacing:-0.9px">REZA-CALC-TEST</div>
<div class="a nw" style="left:1456px;top:588px;font-size:12px;line-height:16px;color:#1c1c1c;letter-spacing:-0.4px">Reza-Calc-Test</div>
<div class="a nw" style="left:1606px;top:588px;font-size:12px;line-height:16px;color:#1c1c1c;letter-spacing:-0.9px">INTERNAL_DELIVERY</div>
<div class="a nw" style="left:256px;top:688px;font-size:12px;line-height:16px;color:#1c1c1c;letter-spacing:-0.2px">1000462</div>
<div class="a nw" style="left:706px;top:688px;font-size:12px;line-height:16px;color:#1c1c1c;letter-spacing:0px">,</div>
<div class="a nw" style="left:1306px;top:688px;font-size:12px;line-height:16px;color:#1c1c1c;letter-spacing:-0.15px">basic-checked1</div>
<div class="a nw" style="left:1456px;top:688px;font-size:12px;line-height:16px;color:#1c1c1c;letter-spacing:-0.15px">basic-checked1</div>
<div class="a nw" style="left:1606px;top:688px;font-size:12px;line-height:16px;color:#1c1c1c;letter-spacing:-0.9px">INTERNAL_DELIVERY</div>
<div class="a nw" style="left:256px;top:738px;font-size:12px;line-height:16px;color:#1c1c1c;letter-spacing:-0.2px">1000462</div>
<div class="a nw" style="left:706px;top:738px;font-size:12px;line-height:16px;color:#1c1c1c;letter-spacing:0px">,</div>
<div class="a nw" style="left:1306px;top:738px;font-size:12px;line-height:16px;color:#1c1c1c;letter-spacing:-0.6px">ITEM ABC</div>
<div class="a nw" style="left:1456px;top:738px;font-size:12px;line-height:16px;color:#1c1c1c;letter-spacing:-0.45px">ITEM ABC LALA</div>
<div class="a nw" style="left:1606px;top:738px;font-size:12px;line-height:16px;color:#1c1c1c;letter-spacing:-0.9px">INTERNAL_DELIVERY</div>
<div class="a" style="left:1860px;top:431px;width:15px;height:342px;background:#fafafa"></div>
<svg class="a" style="left:1862px;top:434px" width="11" height="9" viewBox="0 0 11 9"><polygon points="5.5,1.5 10,8 1,8" fill="#8a8a8a"/></svg>
<div class="a" style="left:1863px;top:449px;width:9px;height:147px;background:#8a8a8a;border-radius:5px"></div>
<svg class="a" style="left:1862px;top:760px" width="11" height="9" viewBox="0 0 11 9"><polygon points="1,1 10,1 5.5,7.5" fill="#8a8a8a"/></svg>
<div class="a" style="left:244px;top:773px;width:1616px;height:15px;background:#fafafa"></div>
<svg class="a" style="left:247px;top:775px" width="10" height="11" viewBox="0 0 10 11"><polygon points="1.5,5.5 8.5,1 8.5,10" fill="#8a8a8a"/></svg>
<div class="a" style="left:262px;top:776px;width:1216px;height:9px;background:#8a8a8a;border-radius:5px"></div>
<svg class="a" style="left:1847px;top:775px" width="10" height="11" viewBox="0 0 10 11"><polygon points="8.5,5.5 1.5,1 1.5,10" fill="#8a8a8a"/></svg>
</body></html>
